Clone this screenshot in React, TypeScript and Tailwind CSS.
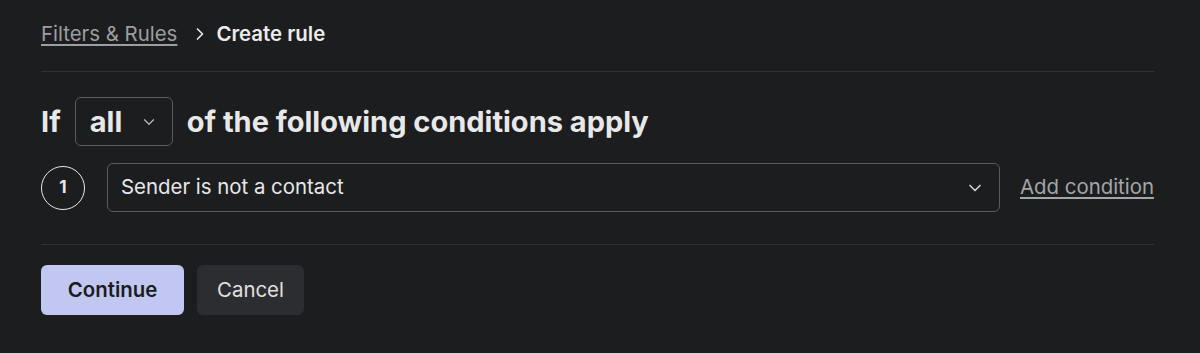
import { ChevronDown, ChevronRight } from "lucide-react";

export default function App() {
  return (
    <div
      className="h-[353px] w-full bg-[#1c1d1f] px-[41px] pt-[20px] text-[#e8e8e8]"
      style={{ fontFamily: "Inter, Lato, sans-serif" }}
    >
      {/* Breadcrumb */}
      <div className="flex h-[28px] items-center text-[20.4px]">
        <a className="text-[#9d9ea1] underline decoration-[#9d9ea1] underline-offset-[3px]">
          Filters &amp; Rules
        </a>
        <ChevronRight size={20} strokeWidth={2} className="ml-[13px] mr-[6px] text-[#e8e8e8]" />
        <span className="font-semibold text-[#ececec]">Create rule</span>
      </div>

      <div className="mt-[23px] h-px w-[1113px] bg-[#313234]" />

      {/* Conditions header */}
      <div className="mt-[25px] flex items-center gap-[14px] text-[29px] font-bold">
        <span>If</span>
        <div className="flex h-[49px] w-[98px] items-center justify-between rounded-[6px] border border-[#5a5b5e] pl-[14px] pr-[14px]">
          <span className="leading-none">all</span>
          <ChevronDown size={18} strokeWidth={1.75} className="text-[#b5b6b8]" />
        </div>
        <span>of the following conditions apply</span>
      </div>

      {/* Condition row */}
      <div className="mt-[17px] flex items-center">
        <div className="flex h-[44px] w-[44px] items-center justify-center rounded-full border-[1.5px] border-[#e8e8e8] text-[17px] font-bold">
          1
        </div>
        <div className="ml-[22px] flex h-[49px] w-[893px] items-center justify-between rounded-[6px] border border-[#5a5b5e] pl-[13px] pr-[14px] text-[20.4px]">
          <span>Sender is not a contact</span>
          <ChevronDown size={20} strokeWidth={2} className="text-[#d0d0d2]" />
        </div>
        <a className="ml-[20px] text-[20.4px] text-[#a4a5a8] underline decoration-[#a4a5a8] underline-offset-[3px]">
          Add condition
        </a>
      </div>

      <div className="mt-[32px] h-px w-[1113px] bg-[#313234]" />

      {/* Actions */}
      <div className="mt-[20px] flex gap-[13px]">
        <button className="h-[50px] w-[143px] rounded-[6px] bg-[#c1c7f1] text-[20.4px] font-semibold text-[#1b1c1f]">
          Continue
        </button>
        <button className="h-[50px] w-[107px] rounded-[6px] bg-[#2c2d30] text-[20.4px] text-[#e0e0e0]">
          Cancel
        </button>
      </div>
    </div>
  );
}
